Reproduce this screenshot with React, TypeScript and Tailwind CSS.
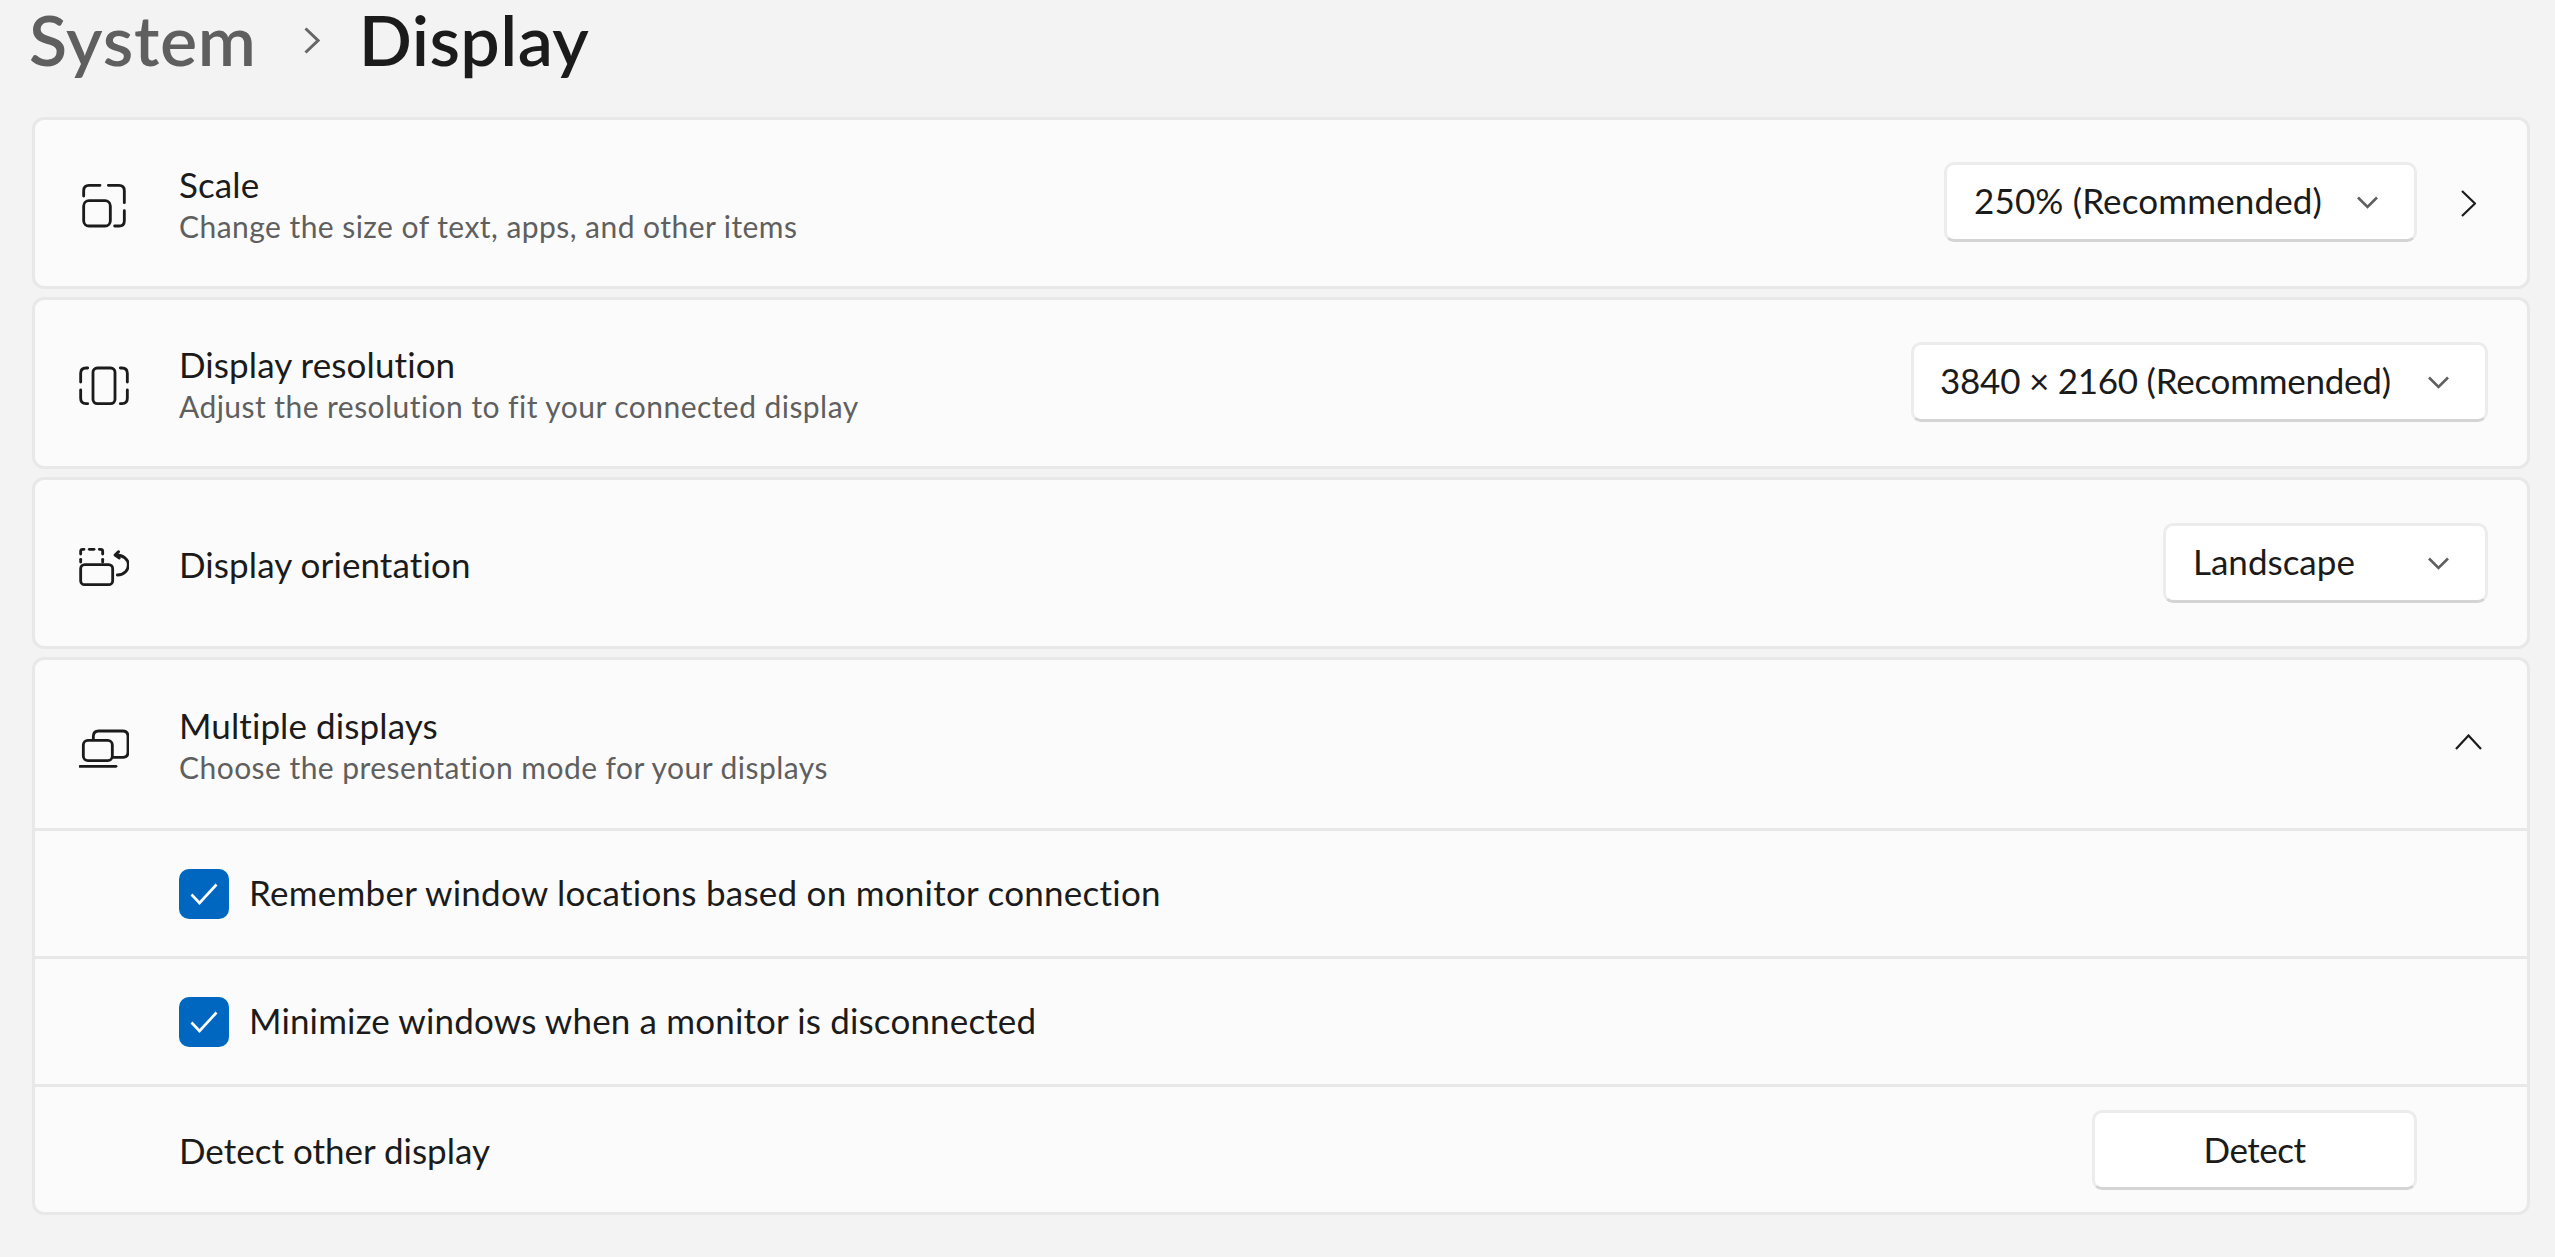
import React from "react";

const iconClass = "h-[50px] w-[50px] shrink-0 fill-none stroke-[#1b1b1b] [stroke-linecap:round] [stroke-linejoin:round] [stroke-width:8.5]";

function ScaleIcon() {
  return (
    <svg viewBox="57 42 150 150" className={iconClass}>
      <path d="M71 96V80Q71 64 87 64H120" />
      <path d="M145 64H177Q193 64 193 80V116" />
      <path d="M193 140V170Q193 186 177 186H164" />
      <rect x="71" y="110" width="80" height="76" rx="16" />
    </svg>
  );
}

function ResolutionIcon() {
  return (
    <svg viewBox="57 42 150 150" className={iconClass}>
      <rect x="99" y="72" width="66" height="107" rx="13" />
      <path d="M83 72H78Q62 72 62 88V114" />
      <path d="M62 138V163Q62 179 78 179H83" />
      <path d="M181 72H186Q202 72 202 88V114" />
      <path d="M202 138V163Q202 179 186 179H181" />
    </svg>
  );
}

function OrientationIcon() {
  return (
    <svg viewBox="57 42 150 150" className={iconClass}>
      <rect x="62" y="122" width="96" height="60" rx="12" />
      <path d="M62 90V82Q62 76 68 76H72" />
      <path d="M88 76H102" />
      <path d="M118 76H122Q128 76 128 82V90" />
      <path d="M62 106V114" />
      <path d="M128 106V114" />
      <path d="M172 153C194 153 205 138 205 122C205 106 190 93 168 93" />
      <path d="M176 83L165 93L178 102" />
    </svg>
  );
}

function MultiIcon() {
  return (
    <svg viewBox="57 42 150 150" className={iconClass}>
      <rect x="70" y="106" width="87" height="61" rx="14" />
      <path d="M100 102V94Q100 78 116 78H188Q204 78 204 94V141Q204 157 188 157H160" />
      <path d="M60 184H168" />
    </svg>
  );
}

function DownChevron() {
  return (
    <svg viewBox="0 0 21 13" className="h-[13px] w-[21px] shrink-0 fill-none stroke-[#5f5f5f] [stroke-width:2.6]">
      <path d="M1 1.5L10.5 11L20 1.5" />
    </svg>
  );
}

function RightChevron() {
  return (
    <div className="flex w-[50px] shrink-0 items-center justify-center">
      <svg viewBox="0 0 15 27" className="h-[27px] w-[15px] fill-none stroke-[#1b1b1b] [stroke-width:2.2]">
        <path d="M1 1L14 13.5L1 26" />
      </svg>
    </div>
  );
}

function UpChevron() {
  return (
    <div className="flex w-[50px] shrink-0 items-center justify-center">
      <svg viewBox="0 0 27 16" className="mb-[4px] h-[16px] w-[27px] fill-none stroke-[#1b1b1b] [stroke-width:2.2]">
        <path d="M1 15L13.5 1.5L26 15" />
      </svg>
    </div>
  );
}

function Dropdown({ label, className }: { label: string; className: string }) {
  return (
    <div className={`flex h-[80px] shrink-0 items-center justify-between rounded-[10px] border-[3px] border-[#ececec] border-b-[#d4d4d4] bg-white pr-[36px] text-[35px] text-[#1b1b1b] ${className}`}>
      <span className="mb-[3px]">{label}</span>
      <DownChevron />
    </div>
  );
}

function Titles({ title, sub }: { title: string; sub?: string }) {
  return (
    <div className="flex flex-col pt-[2px]">
      <div className="text-[35px] leading-[42px] tracking-[0.1px] text-[#1b1b1b]">{title}</div>
      {sub && <div className="mt-[2px] text-[30px] leading-[38px] tracking-[0.45px] text-[#5f5f5f]">{sub}</div>}
    </div>
  );
}

function Card({ children, className }: { children: React.ReactNode; className?: string }) {
  return (
    <div className={`flex h-[172px] items-center rounded-[12px] border-[3px] border-[#e8e8e8] bg-[#fbfbfb] pl-[44px] ${className ?? ""}`}>
      {children}
    </div>
  );
}

function CheckRow({ label, tracking }: { label: string; tracking: string }) {
  return (
    <div className="flex h-[128px] items-center border-t-[3px] border-[#e8e8e8] pl-[144px]">
      <div className="flex h-[50px] w-[50px] shrink-0 items-center justify-center rounded-[10px] bg-[#0067c0]">
        <svg viewBox="0 0 28 22" className="h-[22px] w-[28px] fill-none stroke-white [stroke-width:2.6]">
          <path d="M1.5 11.5L9.5 20L26.5 1.5" />
        </svg>
      </div>
      <span className={`mb-[3px] ml-[20px] text-[35px] text-[#1b1b1b] ${tracking}`}>{label}</span>
    </div>
  );
}

export default function App() {
  return (
    <div className="h-[1257px] w-full bg-[#f3f3f3] pl-[32px] pr-[25px] font-[Lato,sans-serif] [font-variant-ligatures:none]">
      <div className="flex h-[117px] items-start text-[70px] font-semibold leading-[78px]">
        <span className="-ml-[3px] tracking-[0.7px] text-[#5f5f5f]">System</span>
        <svg viewBox="0 0 16 27" className="ml-[47px] mt-[27px] h-[27px] w-[16px] fill-none stroke-[#666666] [stroke-width:3]">
          <path d="M1.5 1.5L14 13.5L1.5 25.5" />
        </svg>
        <span className="ml-[39px] tracking-[0.4px] text-[#1b1b1b]">Display</span>
      </div>

      <div className="flex flex-col gap-[8px]">
        <Card className="pr-[34px]">
          <ScaleIcon />
          <div className="ml-[50px] flex-1">
            <Titles title="Scale" sub="Change the size of text, apps, and other items" />
          </div>
          <Dropdown label="250% (Recommended)" className="mb-[2px] w-[473px] pl-[27px] tracking-[0.15px]" />
          <div className="ml-[26px]">
            <RightChevron />
          </div>
        </Card>

        <Card className="pr-[39px]">
          <ResolutionIcon />
          <div className="ml-[50px] flex-1">
            <Titles title="Display resolution" sub="Adjust the resolution to fit your connected display" />
          </div>
          <Dropdown label="3840 × 2160 (Recommended)" className="mb-[2px] w-[577px] pl-[26px] tracking-[-0.25px]" />
        </Card>

        <Card className="pr-[39px]">
          <OrientationIcon />
          <div className="ml-[50px] flex-1">
            <Titles title="Display orientation" />
          </div>
          <Dropdown label="Landscape" className="w-[325px] pl-[27px]" />
        </Card>

        <div className="flex h-[558px] flex-col overflow-hidden rounded-[12px] border-[3px] border-[#e8e8e8] bg-[#fbfbfb]">
          <div className="flex h-[168px] shrink-0 items-center pl-[44px] pr-[34px]">
            <MultiIcon />
            <div className="ml-[50px] flex-1">
              <Titles title="Multiple displays" sub="Choose the presentation mode for your displays" />
            </div>
            <UpChevron />
          </div>
          <CheckRow label="Remember window locations based on monitor connection" tracking="tracking-[0.25px]" />
          <CheckRow label="Minimize windows when a monitor is disconnected" tracking="tracking-[0.15px]" />
          <div className="flex flex-1 items-center border-t-[3px] border-[#e8e8e8] pl-[144px] pr-[110px]">
            <span className="flex-1 pt-[2px] text-[35px] text-[#1b1b1b]">Detect other display</span>
            <div className="flex h-[80px] w-[325px] items-center justify-center rounded-[10px] border-[3px] border-[#ececec] border-b-[#d4d4d4] bg-white text-[35px] tracking-[-0.5px] text-[#1b1b1b]">
              Detect
            </div>
          </div>
        </div>
      </div>
    </div>
  );
}
